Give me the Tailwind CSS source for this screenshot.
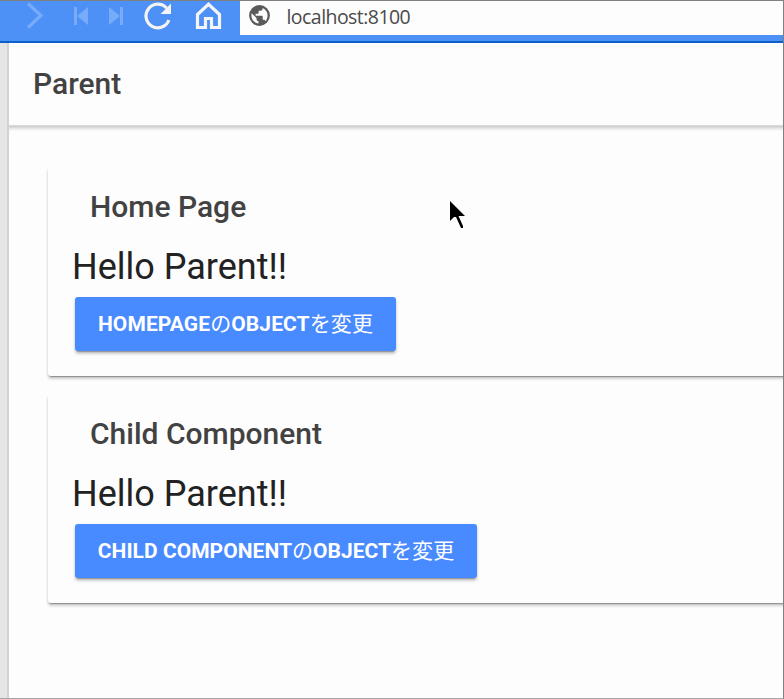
<!DOCTYPE html>
<html lang="ja">
<head>
<meta charset="utf-8">
<title>Parent</title>
<script src="https://cdn.jsdelivr.net/npm/@tailwindcss/browser@4"></script>
</head>
<body class="w-[784px] h-[699px] overflow-hidden bg-[#fdfdfd]">
<div class="w-[784px] h-[699px] flex flex-col border-t border-r border-b border-t-[#808080] border-r-[#808080] border-b-[#a6a6a6] overflow-hidden relative font-[Roboto,'Noto_Sans_CJK_JP',sans-serif]">
  <header class="h-[42px] shrink-0 flex items-start bg-[#4d90f6] border-b-2 border-[#0b61c9]">
    <svg class="w-[240px] h-[40px] shrink-0" viewBox="0 1 240 40" fill="none">
      <path d="M28 3.500 41 15.500 28 27.500" stroke="#78abf9" stroke-width="3.200"/>
      <path d="M74 7h3v18h-3zM88 7v18L77 16zM120 7h3v18h-3zM109 7v18L120 16z" fill="#78abf9"/>
      <path d="M168.900 20A11.800 11.800 0 1 1 166.500 8" stroke="#f4f4f6" stroke-width="3.200"/>
      <path d="M171 3.500v10.500h-10.500z" fill="#f4f4f6"/>
      <path d="M197.500 27.500V14.500L208.500 4.300 219.500 14.500V27.500H211.500V18.500H205.500V27.500Z" stroke="#f4f4f6" stroke-width="3.200"/>
    </svg>
    <div class="h-[34px] flex-1 flex items-center bg-[#fdfdfd] pl-[9px]">
      <svg class="w-[21px] h-[21px] -mt-[5px]" viewBox="0 0 21 21">
        <circle cx="10.500" cy="10.500" r="10.400" fill="#5a5a5a"/>
        <path d="M2.600 8.300 7.500 13v1.200c0 1.100.9 2 2 2v2.300C5.300 18 2.400 14.600 2.400 10.500zM16.600 16.200c-.3-.8-1-1.400-1.900-1.400h-1v-3c0-.6-.4-1-1-1H6.600v-2h2c.6 0 1-.4 1-1v-2h2c1.100 0 2-.9 2-2V3c3 1.200 5 4.100 5 7.500 0 2.200-.8 4.200-2 5.700z" fill="#fdfdfd"/>
      </svg>
      <span class="ml-[16.500px] -mt-[2px] text-[19.500px] leading-[28px] tracking-[-0.55px] text-[#4a4a4a] font-['Open_Sans','Noto_Sans',sans-serif]">localhost:8100</span>
    </div>
  </header>
  <div class="flex flex-1 min-h-0">
    <aside class="w-[9px] shrink-0 bg-[#e5e5e5] border-r-2 border-[#d3d3d3]"></aside>
    <main class="flex-1 min-w-0 overflow-hidden">
      <div class="h-[82px] flex items-center pl-[24px] shadow-[0_1px_0_0_#d8d8d8,0_2px_0_0_#d2d2d2,0_3px_0_0_#dadada,0_4px_0_0_#e6e6e6,0_5px_0_0_#f0f0f0,0_6px_0_0_#f8f8f8]">
        <h1 class="text-[30px] leading-[36px] font-medium text-[#424242]">Parent</h1>
      </div>
      <div class="pt-[42px] pl-[39px] flex flex-col gap-[18px]">
        <section class="w-[800px] h-[209px] rounded-[3px] bg-[#fdfdfd] shadow-[0_3px_3px_0_rgba(0,0,0,0.18),0_3px_1px_-2px_rgba(0,0,0,0.25),0_1px_2px_0_rgba(0,0,0,0.12)]">
          <h2 class="pt-[22px] pl-[42px] text-[30px] leading-[36px] font-medium text-[#424242]">Home Page</h2>
          <p class="pl-[24px] pt-[21px] text-[36px] leading-[42px] text-[#222]">Hello Parent!!</p>
          <button class="ml-[27px] mt-[9px] w-[321px] h-[54px] pt-[1px] block rounded-[3px] bg-[#488aff] text-white text-[21px] tracking-[0.1px] font-bold whitespace-nowrap shadow-[0_3px_3px_0_rgba(0,0,0,0.18),0_3px_1px_-2px_rgba(0,0,0,0.22),0_1px_3px_0_rgba(0,0,0,0.12)]">HOMEPAGE<span class="font-normal">の</span>OBJECT<span class="font-normal">を変更</span></button>
        </section>
        <section class="w-[800px] h-[209px] rounded-[3px] bg-[#fdfdfd] shadow-[0_3px_3px_0_rgba(0,0,0,0.18),0_3px_1px_-2px_rgba(0,0,0,0.25),0_1px_2px_0_rgba(0,0,0,0.12)]">
          <h2 class="pt-[22px] pl-[42px] text-[30px] leading-[36px] font-medium text-[#424242]">Child Component</h2>
          <p class="pl-[24px] pt-[21px] text-[36px] leading-[42px] text-[#222]">Hello Parent!!</p>
          <button class="ml-[27px] mt-[9px] w-[402px] h-[54px] pt-[1px] block rounded-[3px] bg-[#488aff] text-white text-[21px] tracking-[0.03px] font-bold whitespace-nowrap shadow-[0_3px_3px_0_rgba(0,0,0,0.18),0_3px_1px_-2px_rgba(0,0,0,0.22),0_1px_3px_0_rgba(0,0,0,0.12)]">CHILD COMPONENT<span class="font-normal">の</span>OBJECT<span class="font-normal">を変更</span></button>
        </section>
      </div>
    </main>
  </div>
  <svg class="absolute left-[450px] top-[200px] w-[16px] h-[28px]" viewBox="0 0 16 28"><path d="M0 0v20l4-4 2 0 5 11h2v-2L8.500 15H15z"/></svg>
</div>
</body>
</html>
